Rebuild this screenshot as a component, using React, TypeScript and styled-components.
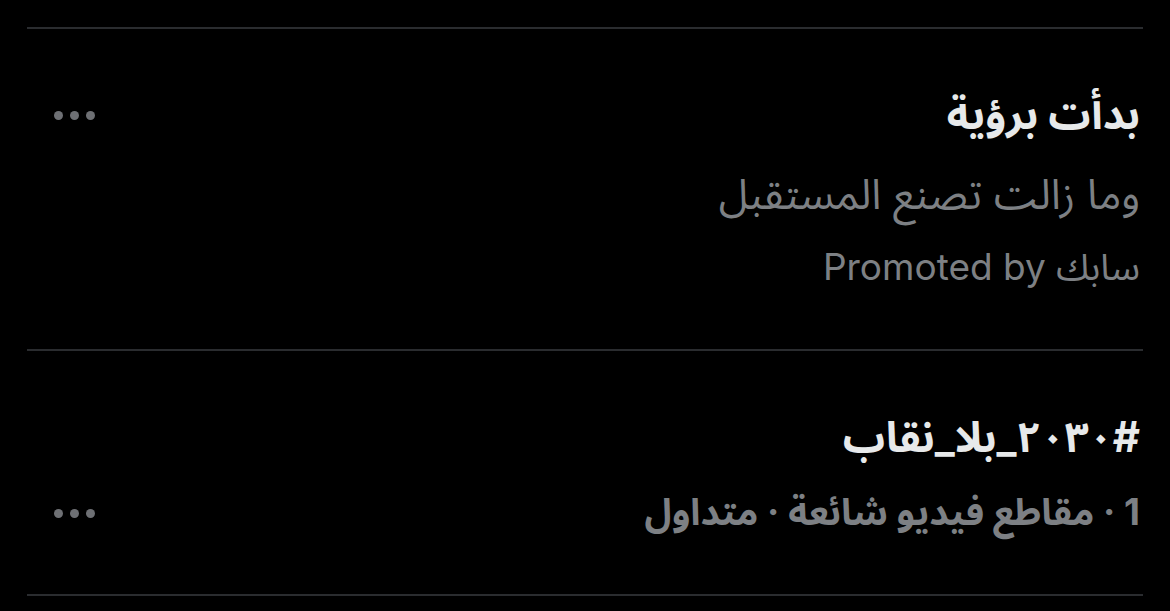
import React from "react";
import styled, { createGlobalStyle } from "styled-components";

const GlobalStyle = createGlobalStyle`
  html, body {
    margin: 0;
    padding: 0;
    background: #000;
  }
  body {
    font-family: "Inter", "Noto Sans Arabic", "DejaVu Sans", sans-serif;
    -webkit-font-smoothing: antialiased;
  }
`;

const Page = styled.div`
  width: 1170px;
  height: 611px;
  background: #000;
  padding-top: 27px;
  box-sizing: border-box;
  overflow: hidden;
`;

const Divider = styled.div`
  height: 2px;
  margin: 0 27px;
  background: #2a2c2f;
`;

const Cell = styled.div<{ $top: number; $bottom: number }>`
  direction: rtl;
  display: flex;
  flex-direction: column;
  padding: ${({ $top }) => $top}px 30px ${({ $bottom }) => $bottom}px 54px;
`;

const Line = styled.div<{ $height: number }>`
  display: flex;
  align-items: center;
  justify-content: space-between;
  height: ${({ $height }) => $height}px;
`;

const Title = styled.span`
  font-size: 42px;
  font-weight: 700;
  color: #e7e9ea;
  white-space: nowrap;
`;

const Meta = styled.span<{ $bold?: boolean; $size?: number }>`
  font-size: ${({ $size }) => $size ?? 42}px;
  font-weight: ${({ $bold }) => ($bold ? 700 : 400)};
  color: #7d8084;
  white-space: nowrap;
`;

const More = styled.button`
  display: flex;
  gap: 7px;
  padding: 0;
  border: 0;
  background: none;
  cursor: pointer;

  span {
    width: 9px;
    height: 9px;
    border-radius: 50%;
    background: #6e7074;
  }
`;

function MoreButton() {
  return (
    <More aria-label="More">
      <span />
      <span />
      <span />
    </More>
  );
}

export default function App() {
  return (
    <Page>
      <GlobalStyle />
      <Divider />
      <Cell $top={46} $bottom={48}>
        <Line $height={80}>
          <Title>بدأت برؤية</Title>
          <MoreButton />
        </Line>
        <Line $height={80}>
          <Meta>وما زالت تصنع المستقبل</Meta>
        </Line>
        <Line $height={66}>
          <Meta $size={37} dir="ltr">
            Promoted by سابك
          </Meta>
        </Line>
      </Cell>
      <Divider />
      <Cell $top={47} $bottom={46}>
        <Line $height={80}>
          <Title>#٢٠٣٠_بلا_نقاب</Title>
        </Line>
        <Line $height={70}>
          <Meta $bold $size={37}>
            1 · مقاطع فيديو شائعة · متداول
          </Meta>
          <MoreButton />
        </Line>
      </Cell>
      <Divider />
    </Page>
  );
}
